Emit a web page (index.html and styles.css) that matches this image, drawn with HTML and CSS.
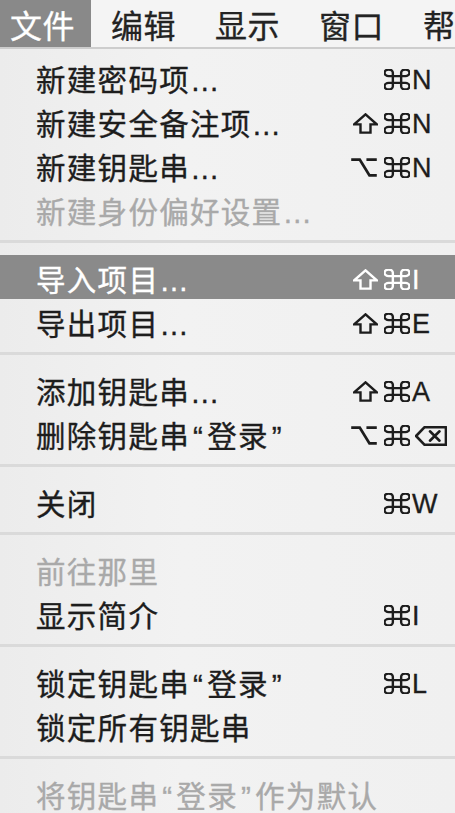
FILE: index.html
```html
<!DOCTYPE html>
<html lang="zh-CN">
<head>
<meta charset="utf-8">
<title>文件菜单</title>
<link rel="stylesheet" href="styles.css">
</head>
<body>
<div class="screen">
  <div class="menubar">
    <span class="mb-item first active">文件</span>
    <span class="mb-item">编辑</span>
    <span class="mb-item">显示</span>
    <span class="mb-item">窗口</span>
    <span class="mb-item">帮助</span>
  </div>
  <div class="menu">
    <div class="item">
      <span class="label">新建密码项…</span>
      <span class="mods"><svg class="sym cmd" viewBox="2.6 2.6 18.8 18.8" preserveAspectRatio="none"><path d="M15 6v12a3 3 0 1 0 3-3H6a3 3 0 1 0 3 3V6a3 3 0 1 0-3 3h12a3 3 0 1 0-3-3"/></svg></span>
      <span class="key">N</span>
    </div>
    <div class="item">
      <span class="label">新建安全备注项…</span>
      <span class="mods"><svg class="sym shift" viewBox="2 2.3 20 18.9" preserveAspectRatio="none"><path d="M12 3.5 3 12.5h5v7.5h8v-7.5h5z"/></svg><svg class="sym cmd" viewBox="2.6 2.6 18.8 18.8" preserveAspectRatio="none"><path d="M15 6v12a3 3 0 1 0 3-3H6a3 3 0 1 0 3 3V6a3 3 0 1 0-3 3h12a3 3 0 1 0-3-3"/></svg></span>
      <span class="key">N</span>
    </div>
    <div class="item">
      <span class="label">新建钥匙串…</span>
      <span class="mods"><svg class="sym opt" viewBox="0.5 5.3 23 14.4" preserveAspectRatio="none"><path d="M1.5 6.5h7l8 12h6M14 6.5h8.5"/></svg><svg class="sym cmd" viewBox="2.6 2.6 18.8 18.8" preserveAspectRatio="none"><path d="M15 6v12a3 3 0 1 0 3-3H6a3 3 0 1 0 3 3V6a3 3 0 1 0-3 3h12a3 3 0 1 0-3-3"/></svg></span>
      <span class="key">N</span>
    </div>
    <div class="item disabled">
      <span class="label">新建身份偏好设置…</span>
    </div>

    <div class="sep"></div>

    <div class="item selected">
      <span class="label">导入项目…</span>
      <span class="mods"><svg class="sym shift" viewBox="2 2.3 20 18.9" preserveAspectRatio="none"><path d="M12 3.5 3 12.5h5v7.5h8v-7.5h5z"/></svg><svg class="sym cmd" viewBox="2.6 2.6 18.8 18.8" preserveAspectRatio="none"><path d="M15 6v12a3 3 0 1 0 3-3H6a3 3 0 1 0 3 3V6a3 3 0 1 0-3 3h12a3 3 0 1 0-3-3"/></svg></span>
      <span class="key">I</span>
    </div>
    <div class="item">
      <span class="label">导出项目…</span>
      <span class="mods"><svg class="sym shift" viewBox="2 2.3 20 18.9" preserveAspectRatio="none"><path d="M12 3.5 3 12.5h5v7.5h8v-7.5h5z"/></svg><svg class="sym cmd" viewBox="2.6 2.6 18.8 18.8" preserveAspectRatio="none"><path d="M15 6v12a3 3 0 1 0 3-3H6a3 3 0 1 0 3 3V6a3 3 0 1 0-3 3h12a3 3 0 1 0-3-3"/></svg></span>
      <span class="key">E</span>
    </div>

    <div class="sep"></div>

    <div class="item">
      <span class="label">添加钥匙串…</span>
      <span class="mods"><svg class="sym shift" viewBox="2 2.3 20 18.9" preserveAspectRatio="none"><path d="M12 3.5 3 12.5h5v7.5h8v-7.5h5z"/></svg><svg class="sym cmd" viewBox="2.6 2.6 18.8 18.8" preserveAspectRatio="none"><path d="M15 6v12a3 3 0 1 0 3-3H6a3 3 0 1 0 3 3V6a3 3 0 1 0-3 3h12a3 3 0 1 0-3-3"/></svg></span>
      <span class="key">A</span>
    </div>
    <div class="item">
      <span class="label">删除钥匙串<span class="q">“</span>登录<span class="q">”</span></span>
      <span class="mods"><svg class="sym opt" viewBox="0.5 5.3 23 14.4" preserveAspectRatio="none"><path d="M1.5 6.5h7l8 12h6M14 6.5h8.5"/></svg><svg class="sym cmd" viewBox="2.6 2.6 18.8 18.8" preserveAspectRatio="none"><path d="M15 6v12a3 3 0 1 0 3-3H6a3 3 0 1 0 3 3V6a3 3 0 1 0-3 3h12a3 3 0 1 0-3-3"/></svg></span>
      <span class="key"><svg class="sym del" viewBox="0.5 3.5 30 17" preserveAspectRatio="none"><path d="M9.5 4.5h20v15h-20l-8-7.5z"/><path d="M14.5 8l9 8M23.5 8l-9 8"/></svg></span>
    </div>

    <div class="sep"></div>

    <div class="item">
      <span class="label">关闭</span>
      <span class="mods"><svg class="sym cmd" viewBox="2.6 2.6 18.8 18.8" preserveAspectRatio="none"><path d="M15 6v12a3 3 0 1 0 3-3H6a3 3 0 1 0 3 3V6a3 3 0 1 0-3 3h12a3 3 0 1 0-3-3"/></svg></span>
      <span class="key">W</span>
    </div>

    <div class="sep"></div>

    <div class="item disabled">
      <span class="label">前往那里</span>
    </div>
    <div class="item">
      <span class="label">显示简介</span>
      <span class="mods"><svg class="sym cmd" viewBox="2.6 2.6 18.8 18.8" preserveAspectRatio="none"><path d="M15 6v12a3 3 0 1 0 3-3H6a3 3 0 1 0 3 3V6a3 3 0 1 0-3 3h12a3 3 0 1 0-3-3"/></svg></span>
      <span class="key">I</span>
    </div>

    <div class="sep"></div>

    <div class="item">
      <span class="label">锁定钥匙串<span class="q">“</span>登录<span class="q">”</span></span>
      <span class="mods"><svg class="sym cmd" viewBox="2.6 2.6 18.8 18.8" preserveAspectRatio="none"><path d="M15 6v12a3 3 0 1 0 3-3H6a3 3 0 1 0 3 3V6a3 3 0 1 0-3 3h12a3 3 0 1 0-3-3"/></svg></span>
      <span class="key">L</span>
    </div>
    <div class="item">
      <span class="label">锁定所有钥匙串</span>
    </div>

    <div class="sep"></div>

    <div class="item disabled">
      <span class="label">将钥匙串<span class="q">“</span>登录<span class="q">”</span>作为默认</span>
    </div>
  </div>
</div>
</body>
</html>
```

FILE: styles.css
```css
* { box-sizing: border-box; }

html, body {
  margin: 0;
  padding: 0;
  background: #efefef;
}

.screen {
  width: 455px;
  height: 813px;
  overflow: hidden;
  background: linear-gradient(90deg, #ececec 0%, #f2f2f2 40%, #f0f0f0 100%);
  font-family: "Liberation Sans", "Noto Sans CJK SC", sans-serif;
  color: #1d1d1d;
}

.menubar {
  display: flex;
  height: 49px;
  background: #f4f4f4;
  border-bottom: 2px solid #cdcdcd;
  white-space: nowrap;
  overflow: hidden;
}

.mb-item {
  display: flex;
  align-items: center;
  height: 47px;
  padding: 0 19px 0 20px;
  font-family: "Noto Sans CJK SC", sans-serif;
  font-size: 32px;
  letter-spacing: 0.5px;
  color: #232323;
  -webkit-text-stroke: 0.3px currentColor;
  flex: none;
}

.mb-item.first {
  padding-left: 10px;
  padding-right: 16px;
}

.mb-item.active {
  background: #898989;
  color: #ffffff;
}

.menu {
  padding-top: 6px;
}

.item {
  display: grid;
  grid-template-columns: 1fr auto 43px;
  align-items: center;
  height: 44px;
  padding-left: 36px;
}

.label {
  font-family: "Liberation Sans", "Noto Sans CJK SC", sans-serif;
  font-size: 29.5px;
  letter-spacing: 1.3px;
  line-height: 44px;
  padding-top: 4px;
  white-space: nowrap;
  -webkit-text-stroke: 0.35px currentColor;
}

.q {
  margin: 0 3px;
}

.mods {
  display: flex;
  align-items: center;
  gap: 6px;
  margin-right: 2px;
  padding-top: 1px;
}

.key {
  display: flex;
  align-items: center;
  font-family: "Liberation Sans", sans-serif;
  font-size: 27px;
  line-height: 44px;
  padding-top: 2px;
  -webkit-text-stroke: 0.3px currentColor;
}

.sym {
  display: block;
  fill: none;
  stroke: currentColor;
  stroke-width: 2.4px;
  stroke-linejoin: round;
  stroke-linecap: round;
}

.sym path {
  vector-effect: non-scaling-stroke;
}

.sym.cmd { width: 26px; height: 21px; }
.sym.shift { width: 25px; height: 21px; stroke-linejoin: miter; }
.sym.opt { width: 28px; height: 19px; stroke-width: 2.8px; stroke-linecap: butt; stroke-linejoin: miter; }
.sym.del { width: 32px; height: 20px; stroke-width: 2.6px; margin-left: 3px; }

.item.disabled {
  color: #a9a9a9;
}

.item.selected {
  background: #8a8a8a;
  color: #ffffff;
}

.sep {
  height: 24px;
  padding-top: 9px;
}

.sep::before {
  content: "";
  display: block;
  height: 3px;
  background: #dadada;
}
```
